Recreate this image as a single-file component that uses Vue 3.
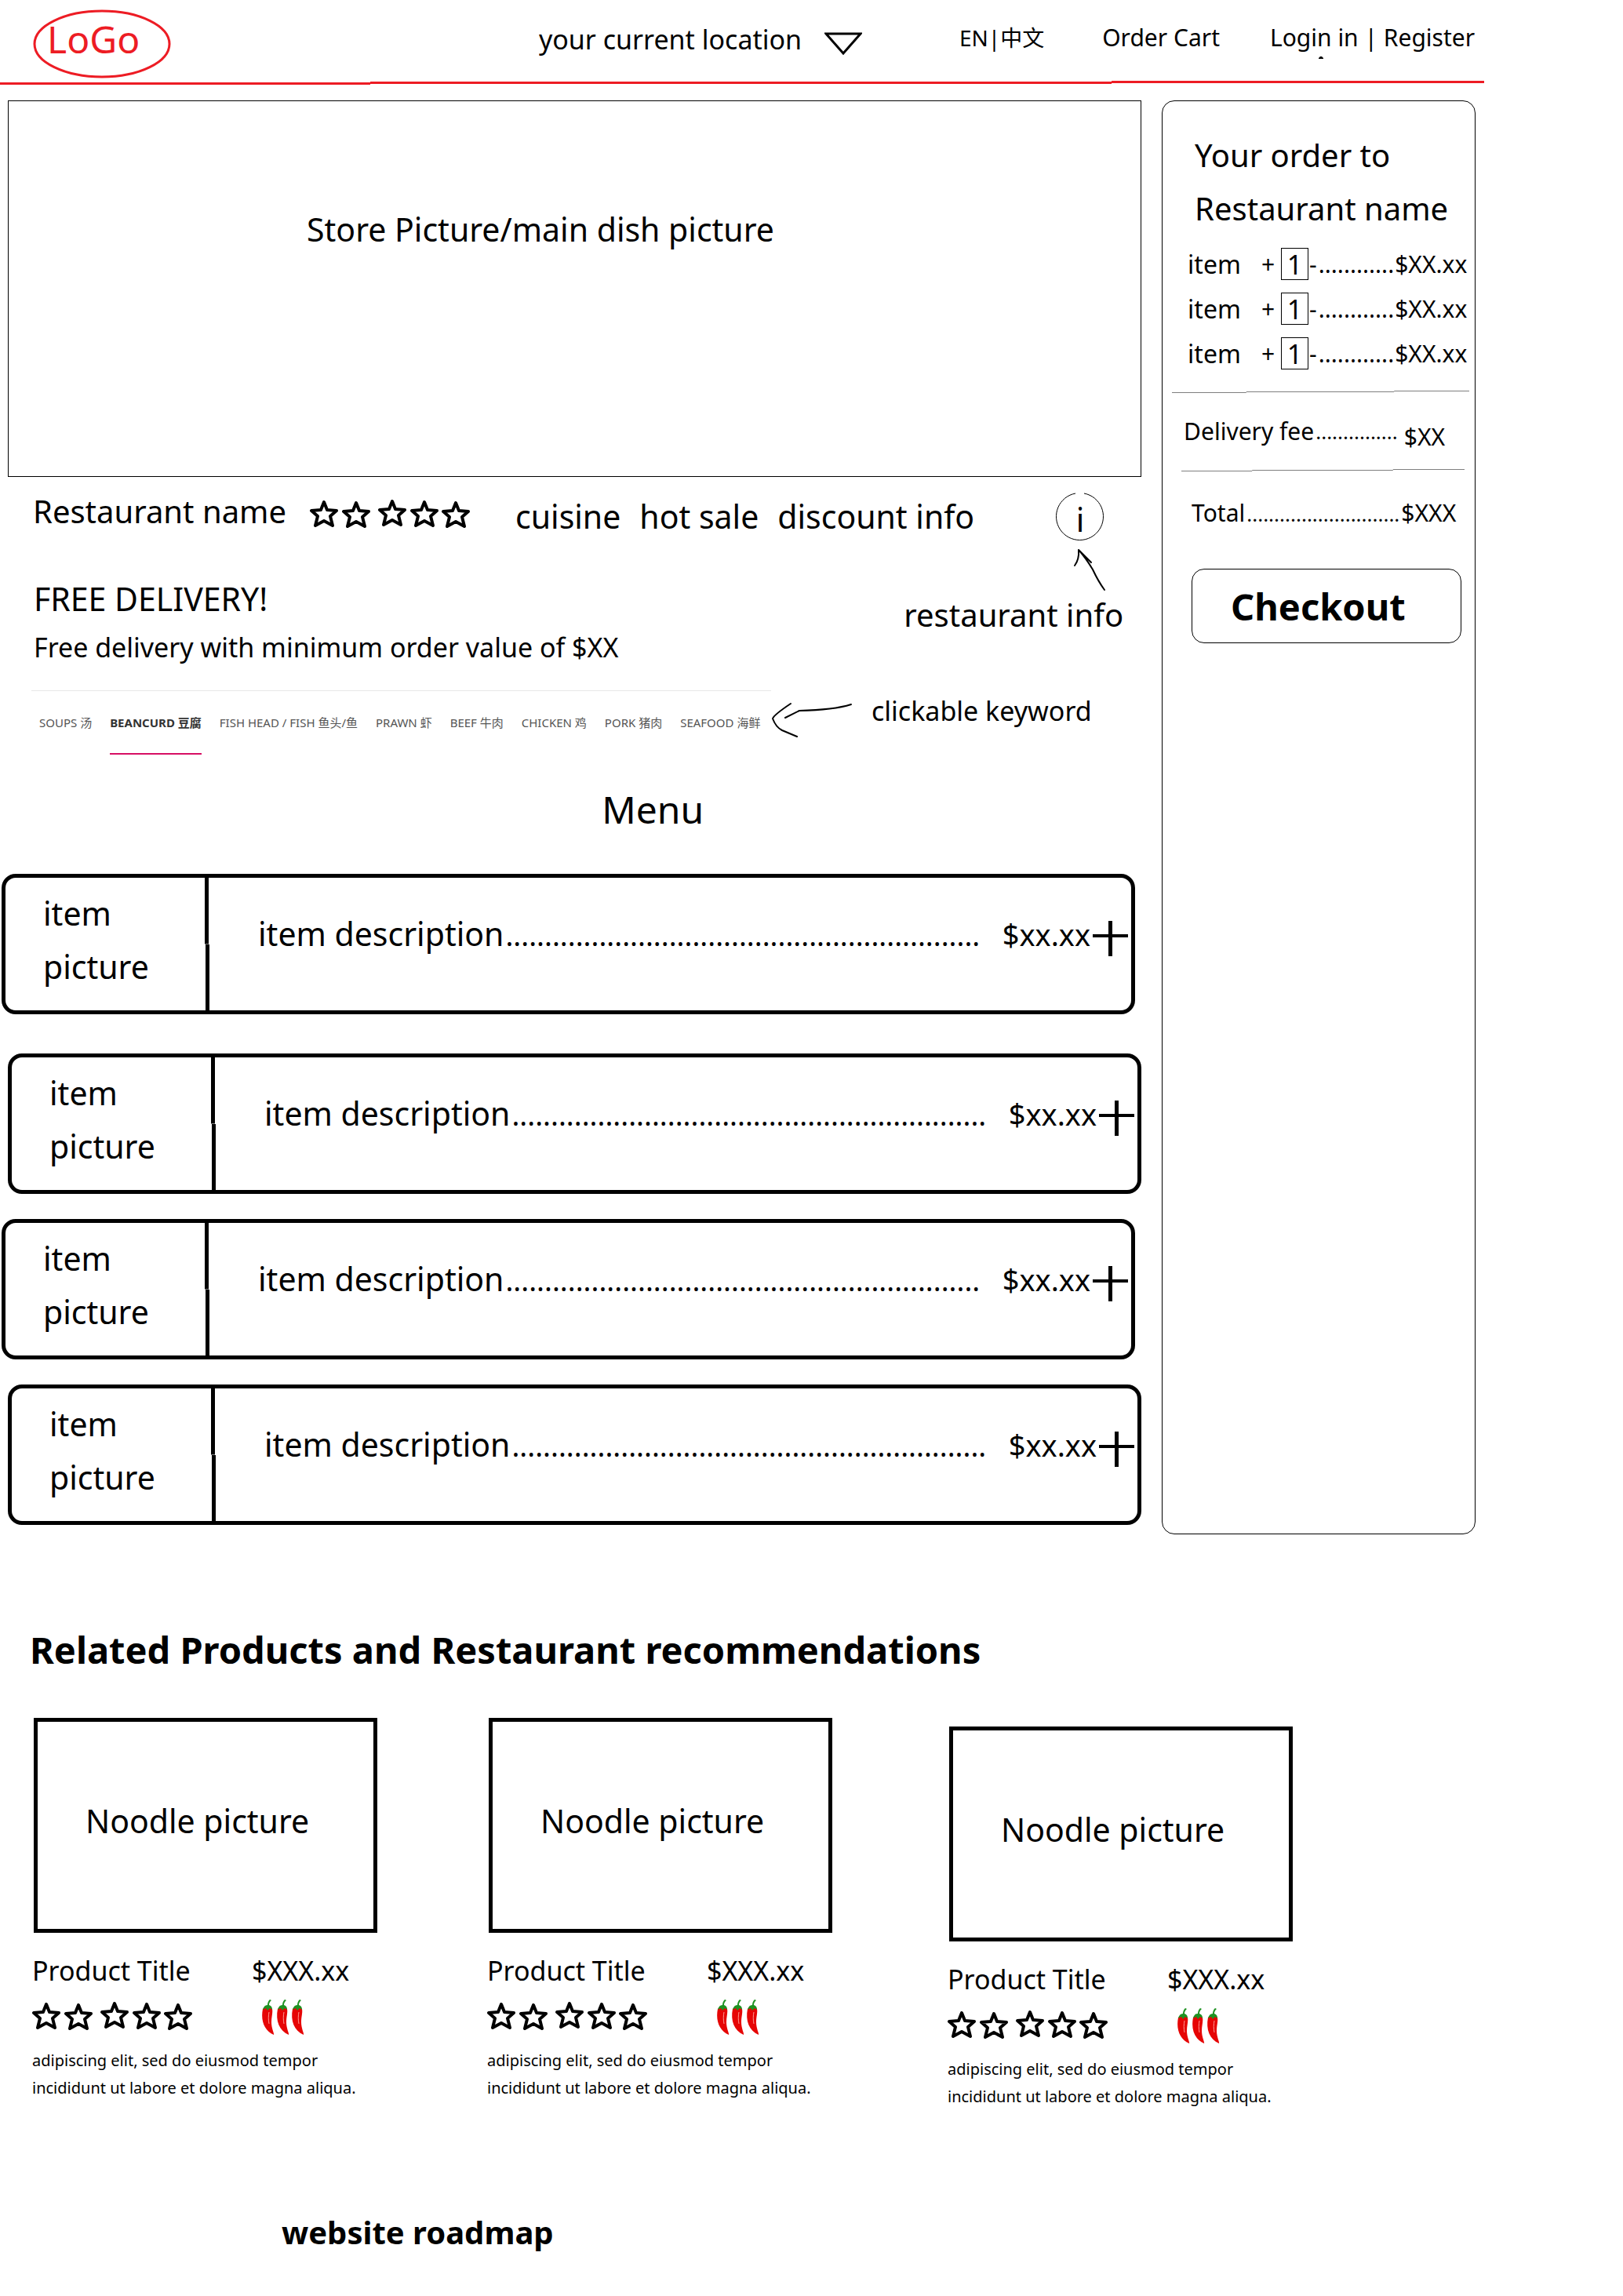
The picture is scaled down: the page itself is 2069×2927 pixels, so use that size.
<script setup>
import { ref } from 'vue'

const location = ref('your current location')

const orderLines = ref([
  { id: 1, name: 'item', qty: '1', price: '$XX.xx' },
  { id: 2, name: 'item', qty: '1', price: '$XX.xx' },
  { id: 3, name: 'item', qty: '1', price: '$XX.xx' },
])

const facts = ['cuisine', 'hot sale', 'discount info']

const categories = [
  'SOUPS 汤',
  'BEANCURD 豆腐',
  'FISH HEAD / FISH 鱼头/鱼',
  'PRAWN 虾',
  'BEEF 牛肉',
  'CHICKEN 鸡',
  'PORK 猪肉',
  'SEAFOOD 海鲜',
]
const activeCategory = ref(1)

const menuItems = [1, 2, 3, 4]
const products = [1, 2, 3]

// Hand-drawn stars: each one sits slightly differently on the line
const stars = [
  [18, 1],
  [59, 2],
  [105, 0],
  [146, 1],
  [186, 2],
]
const starPath = 'M0 3L4 13L16 14L8 21L11 33L0 27L-11 33L-8 21L-16 14L-4 13Z'

const dots = (n) => '.'.repeat(n)

function step(line, by) {
  line.qty = String(Math.max(0, Number(line.qty) + by))
}
</script>

<template>
  <div class="page">
    <header class="header">
      <div class="bar">
        <a class="logo" href="#">
          <svg class="logo-ring" viewBox="0 0 176 88" aria-hidden="true">
            <ellipse cx="88" cy="44" rx="86" ry="42" fill="none" stroke="#ed1c24" stroke-width="3" />
          </svg>
          <span>LoGo</span>
        </a>
        <nav class="nav">
          <label class="location">
            <select v-model="location" aria-label="Location">
              <option>your current location</option>
            </select>
            <svg class="caret" viewBox="0 0 48 30" aria-hidden="true">
              <path d="M2 2H46L24 27Z" fill="none" stroke="#000" stroke-width="3" />
            </svg>
          </label>
          <span class="lang"><a href="#en">EN</a>|<a href="#zh">中文</a></span>
          <a class="cart" href="#cart">Order Cart</a>
          <span class="account">
            <a href="#login">Login in</a> | <a href="#register">Register</a>
            <svg class="speck" viewBox="0 0 6 3" aria-hidden="true"><path d="M0 3V2L2 0H4L6 2V3Z" /></svg>
          </span>
        </nav>
      </div>
      <svg class="rule" viewBox="0 0 1892 5" preserveAspectRatio="none" aria-hidden="true">
        <path d="M0 2H472V5H0ZM472 1H1417V4H472ZM1417 0H1892V3H1417Z" fill="#ed1c24" />
      </svg>
    </header>

    <div class="columns">
      <main class="main">
        <div class="hero">Store Picture/main dish picture</div>

        <section class="intro">
          <h1>Restaurant name</h1>
          <svg class="stars" viewBox="0 0 204 37" role="img" aria-label="Rating">
            <path
              v-for="s in stars"
              :key="s[0]"
              :d="starPath"
              :transform="`translate(${s[0]} ${s[1]})`"
            />
          </svg>
          <ul class="facts">
            <li v-for="f in facts" :key="f">{{ f }}</li>
          </ul>
          <button class="info" type="button" aria-label="Restaurant info">
            <svg viewBox="0 0 62 62" aria-hidden="true">
              <path d="M25 1A30 30 0 1 0 36 1" fill="none" stroke="#000" />
            </svg>
            <span>i</span>
          </button>
        </section>

        <section class="promo-row">
          <div class="promo">
            <h2>FREE DELIVERY!</h2>
            <p>Free delivery with minimum order value of $XX</p>
          </div>
          <div class="info-note">
            <svg class="arrow-up" viewBox="0 0 44 55" aria-hidden="true">
              <path d="M42 53Q34 42 27 27Q18 12 9 2L25 18M9 2Q10 14 4 22" />
            </svg>
            <p>restaurant info</p>
          </div>
        </section>

        <section class="tab-row">
          <nav class="tabs">
            <a
              v-for="(c, i) in categories"
              :key="c"
              href="#menu"
              :class="{ active: i === activeCategory }"
              @click="activeCategory = i"
              >{{ c }}</a
            >
          </nav>
          <svg class="arrow-left" viewBox="0 0 104 46" aria-hidden="true">
            <path d="M25 2Q4 16 2 21Q6 32 14 36L33 44M18 20L36 11Q80 10 102 3" />
          </svg>
          <p>clickable keyword</p>
        </section>

        <h2 id="menu" class="menu-title">Menu</h2>

        <ul class="menu">
          <li v-for="m in menuItems" :key="m" class="dish">
            <div class="dish-picture">item<br />picture</div>
            <div class="dish-divider"></div>
            <div class="dish-body">
              <span class="dish-text">item description</span>
              <span class="dish-dots">{{ dots(61) }}</span>
              <span class="dish-price">$xx.xx</span>
              <button type="button" aria-label="Add item">
                <svg viewBox="0 0 45 45" aria-hidden="true">
                  <path d="M0 17H20V0H25V17H45V21H25V45H20V21H0Z" />
                </svg>
              </button>
            </div>
          </li>
        </ul>
      </main>

      <aside class="order">
        <h2>Your order to<br />Restaurant name</h2>
        <ul class="lines">
          <li v-for="line in orderLines" :key="line.id">
            <label :for="`qty-${line.id}`">{{ line.name }}</label>
            <button type="button" aria-label="More" @click="step(line, 1)">+</button>
            <input :id="`qty-${line.id}`" v-model="line.qty" type="text" inputmode="numeric" />
            <button type="button" aria-label="Less" @click="step(line, -1)">-</button>
            <span class="line-dots">{{ dots(12) }}</span>
            <span>{{ line.price }}</span>
          </li>
        </ul>
        <svg class="sketch-line" viewBox="0 0 380 4" preserveAspectRatio="none" aria-hidden="true">
          <path d="M0 3H95V4H0ZM95 2H284V3H95ZM284 1H380V2H284Z" fill="#7f7f7f" />
        </svg>
        <div class="fee">
          <span>Delivery fee</span><span class="small-dots">{{ dots(15) }}</span
          ><span class="fee-price">$XX</span>
        </div>
        <svg class="sketch-line short" viewBox="0 0 380 4" preserveAspectRatio="none" aria-hidden="true">
          <path d="M0 3H95V4H0ZM95 2H284V3H95ZM284 1H380V2H284Z" fill="#7f7f7f" />
        </svg>
        <div class="total">
          <span>Total</span><span class="small-dots">{{ dots(28) }}</span
          ><span>$XXX</span>
        </div>
        <button class="checkout" type="button">Checkout</button>
      </aside>
    </div>

    <section class="related">
      <h2>Related Products and Restaurant recommendations</h2>
      <ul>
        <li v-for="p in products" :key="p" class="product">
          <div class="thumb">Noodle picture</div>
          <div class="product-head">
            <h3>Product Title</h3>
            <span>$XXX.xx</span>
          </div>
          <div class="product-marks">
            <svg class="stars" viewBox="0 0 204 37" role="img" aria-label="Rating">
              <path
                v-for="s in stars"
                :key="s[0]"
                :d="starPath"
                :transform="`translate(${s[0]} ${s[1]})`"
              />
            </svg>
            <svg class="chilies" viewBox="0 0 54 45" role="img" aria-label="Spicy">
              <g v-for="n in 3" :key="n" :transform="`translate(${(n - 1) * 19} 0)`">
                <path d="M1 12C-2 27 3 40 15 45C16 44 12 37 12 29C12 22 14 17 13 12C10 8 4 8 1 12Z" fill="#e60505" />
                <path d="M9 16C8 21 8 26 9 31" fill="none" stroke="#ff9a94" stroke-width="1" />
                <path d="M10 0L12 1C9 4 9 6 9 7C12 8 13 10 13 13L10 11L7 14L5 11L1 13C2 9 4 7 7 7C7 4 8 2 10 0Z" fill="#1f9222" />
              </g>
            </svg>
          </div>
          <p>adipiscing elit, sed do eiusmod tempor<br />incididunt ut labore et dolore magna aliqua.</p>
        </li>
      </ul>
    </section>

    <footer class="footer">website roadmap</footer>
  </div>
</template>

<style>
body {
  margin: 0;
  background: #fff;
}
</style>

<style scoped>
* {
  box-sizing: border-box;
}

.page {
  color: #000;
  font-family: 'Noto Sans', 'Noto Sans CJK SC', sans-serif;
  font-size: 41px;
  line-height: 60px;
}

h1,
h2,
h3,
p,
ul {
  margin: 0;
  padding: 0;
  font-size: inherit;
  font-weight: 400;
  list-style: none;
}

a {
  color: inherit;
  text-decoration: none;
}

button,
input,
select {
  margin: 0;
  padding: 0;
  border: 0;
  border-radius: 0;
  background: none;
  color: inherit;
  font: inherit;
}

svg {
  display: block;
  flex: none;
}

.header,
.columns {
  width: 91.45%;
}

/* Header */
.bar {
  display: flex;
  justify-content: space-between;
  padding: 12px 12px 3px 42px;
}

.logo {
  position: relative;
  width: 176px;
  height: 88px;
  padding: 8px 0 0 18px;
  color: #ed1c24;
  font-size: 48px;
}

.logo-ring {
  position: absolute;
  inset: 0;
}

.nav {
  display: flex;
  align-items: center;
  padding-bottom: 16px;
  font-size: 30px;
  line-height: 44px;
  white-space: nowrap;
}

.location {
  display: flex;
  align-items: center;
  gap: 28px;
  padding-top: 4px;
  font-size: 34px;
}

.location select {
  appearance: none;
}

.caret {
  width: 48px;
  height: 30px;
  margin-top: 12px;
}

.lang {
  margin-left: 124px;
  font-size: 28px;
}

.cart {
  margin-left: 74px;
}

.account {
  position: relative;
  margin-left: 64px;
}

.speck {
  position: absolute;
  top: 46px;
  left: 62px;
  width: 6px;
  height: 3px;
}

.rule {
  width: 100%;
  height: 5px;
}

/* Two-column area */
.columns {
  display: flex;
  gap: 26px;
  padding: 20px 11px 0 10px;
}

.main {
  flex: 1;
  min-width: 0;
  padding-bottom: 12px;
}

.hero {
  height: 480px;
  padding: 129px 0 0 26.3%;
  border: 1px solid #000;
  line-height: 68px;
}

.intro {
  display: flex;
  align-items: flex-start;
  padding: 14px 47px 0 32px;
}

.intro h1,
.info-note p {
  font-size: 40px;
}

.stars {
  width: 204px;
  height: 37px;
  fill: none;
  stroke: #000;
  stroke-width: 4;
  stroke-linejoin: round;
}

.intro .stars {
  margin: 14px 58px 0 30px;
}

.facts {
  display: flex;
  gap: 24px;
  padding-top: 6px;
}

.info {
  position: relative;
  width: 62px;
  height: 62px;
  margin: 6px 0 0 auto;
  padding-top: 4px;
}

.info svg {
  position: absolute;
  inset: 0;
}

.promo-row {
  display: flex;
  justify-content: space-between;
  padding: 0 23px 0 33px;
}

.promo {
  display: grid;
  gap: 2px;
  padding-top: 43px;
}

.promo p {
  font-size: 34px;
}

.arrow-up {
  width: 44px;
  height: 55px;
  margin: 9px 22px 0 auto;
}

.arrow-up,
.arrow-left {
  fill: none;
  stroke: #000;
  stroke-width: 2;
  stroke-linecap: round;
  stroke-linejoin: round;
}

.tab-row {
  display: flex;
  align-items: flex-start;
  margin-top: 25px;
  padding-left: 30px;
  font-size: 34px;
  line-height: 50px;
}

.tabs {
  display: flex;
  gap: 23px;
  width: 943px;
  padding: 30px 0 0 10px;
  border-top: 1px solid #e8e8e8;
  color: #555;
  font-size: 15px;
  line-height: 20px;
  white-space: nowrap;
}

.tabs a {
  padding-bottom: 29px;
  border-bottom: 2px solid transparent;
}

.tabs .active {
  border-color: #d70f64;
  color: #333;
  font-weight: 700;
}

.arrow-left {
  width: 104px;
  height: 46px;
  margin: 15px 24px 0 0;
}

.tab-row p {
  padding-top: 1px;
}

.menu-title {
  margin-top: 36px;
  padding-left: 52.4%;
  font-size: 48px;
  line-height: 68px;
}

.menu {
  display: grid;
  gap: 32px;
  margin-top: 48px;
  line-height: 68px;
}

.dish {
  display: flex;
  height: 179px;
  border: 5px solid #000;
  border-radius: 18px;
}

.dish:nth-child(odd) {
  margin: 0 8px 0 -8px;
}

.dish:first-child {
  margin-bottom: 18px;
}

.dish-picture {
  width: 254px;
  padding: 11px 0 0 48px;
}

.dish-divider {
  width: 6px;
  background:
    linear-gradient(#000, #000) left top / 5px 50% no-repeat,
    linear-gradient(#000, #000) right bottom / 5px 50% no-repeat;
}

.dish-body {
  display: flex;
  flex: 1;
  align-items: baseline;
  min-width: 0;
  padding: 37px 4px 0 62px;
}

.dish-dots {
  margin-left: 2px;
  font-size: 37px;
}

.dish-price {
  margin-left: auto;
  font-size: 38px;
}

.dish-body button {
  align-self: flex-start;
  width: 45px;
  height: 45px;
  margin: 18px 0 0 3px;
}

/* Order panel */
.order {
  flex: none;
  width: 400px;
  border: 1px solid #000;
  border-radius: 16px;
  font-size: 30px;
  line-height: 40px;
  white-space: nowrap;
}

.order h2 {
  padding: 35px 0 0 41px;
  font-size: 40px;
  line-height: 68px;
}

.lines {
  display: grid;
  gap: 16px;
  margin: 16px 0 0 32px;
}

.lines li {
  display: flex;
  align-items: center;
  height: 41px;
}

.lines label {
  margin-right: 26px;
  font-size: 32px;
}

.lines input {
  width: 35px;
  height: 41px;
  margin: 0 1px 0 8px;
  border: 1px solid #000;
  font-size: 34px;
  text-align: center;
}

.line-dots {
  margin: 0 1px 0 2px;
}

.sketch-line {
  width: calc(100% - 19px);
  height: 4px;
  margin: 26px 7px 0 12px;
}

.sketch-line.short {
  width: calc(100% - 37px);
  margin: 20px 13px 0 24px;
}

.fee,
.total {
  display: flex;
}

.fee {
  margin: 29px 0 0 27px;
}

.fee-price {
  margin-left: 6px;
  padding-top: 7px;
}

.small-dots {
  margin: 0 2px;
  font-size: 26px;
}

.total {
  align-items: baseline;
  margin: 33px 0 0 37px;
}

.checkout {
  display: block;
  width: calc(100% - 54px);
  height: 95px;
  margin: 50px 0 0 37px;
  padding-left: 49px;
  border: 1px solid #000;
  border-radius: 16px;
  font-size: 47px;
  font-weight: 700;
  text-align: left;
}

/* Related products */
.related {
  margin-top: 113px;
}

.related h2 {
  padding-left: 38px;
  font-size: 47px;
  font-weight: 700;
  line-height: 68px;
}

.related ul {
  display: flex;
  gap: 139px;
  margin-top: 53px;
  padding-left: 41px;
}

.product {
  flex: 0 1 441px;
}

.product:last-child {
  margin: 11px 0 0 7px;
}

.thumb {
  height: 274px;
  margin: 0 1px 0 2px;
  padding: 92px 0 0 61px;
  border: 5px solid #000;
  line-height: 68px;
}

.product-head {
  display: flex;
  margin-top: 23px;
  font-size: 34px;
  line-height: 50px;
}

.product-head h3 {
  width: 280px;
}

.product-marks {
  display: flex;
  margin-top: 12px;
}

.product-marks .stars {
  margin: 2px 89px 0 0;
}

.chilies {
  width: 54px;
  height: 45px;
}

.product p {
  margin-top: 15px;
  font-size: 20px;
  line-height: 35px;
  white-space: nowrap;
}

.footer {
  margin-top: 126px;
  padding: 0 0 49px 359px;
  font-size: 40px;
  font-weight: 700;
}
</style>
